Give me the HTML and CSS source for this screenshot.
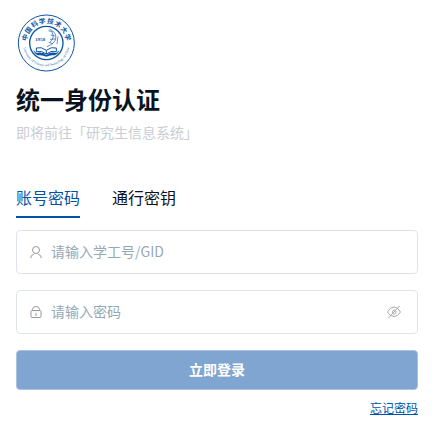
FILE: index.html
```
<!DOCTYPE html>
<html lang="zh-CN">
<head>
<meta charset="UTF-8">
<meta name="viewport" content="width=device-width, initial-scale=1">
<title>统一身份认证</title>
<link rel="stylesheet" href="styles.css">
</head>
<body>
<main class="login">
<svg class="logo" viewBox="0 0 180 180" role="img" aria-label="中国科学技术大学">
<defs><path id="arc" d="M21 87A70 70 0 0 0 161 87"/></defs>
<circle class="line" cx="91" cy="87" r="84" stroke-width="3"/>
<circle class="line" cx="91" cy="87" r="50" stroke-width="4"/>
<g class="name" transform="translate(91 87)">
<text y="-59" transform="rotate(-75)">中</text>
<text y="-59" transform="rotate(-54)">国</text>
<text y="-59" transform="rotate(-32)">科</text>
<text y="-59" transform="rotate(-11)">学</text>
<text y="-59" transform="rotate(11)">技</text>
<text y="-59" transform="rotate(32)">术</text>
<text y="-59" transform="rotate(54)">大</text>
<text y="-59" transform="rotate(75)">学</text>
</g>
<text class="latin"><textPath href="#arc" startOffset="50%">University of Science and Technology of China</textPath></text>
<text class="year" x="73" y="82">1958</text>
<!-- spray above the open book -->
<path class="line" stroke-width="2" d="M100 45Q123 55 119 75Q117 87 93 98M108 55Q117 69 103 84"/>
<path class="line" stroke-width="2" d="M97 50L110 54M104 63L116 65M102 76L117 75M98 85L111 89M126 67L123 90"/>
<path class="line" stroke-width="3" d="M91 120V109Q76 97 61 102V113Q78 109 91 120Q104 109 121 113V102Q106 97 91 109"/>
<path class="fill" d="M52 108L61 117Q79 113 91 123Q103 113 121 117L130 108Q126 121 116 124Q102 122 91 128Q80 122 66 124Q56 121 52 108Z"/>
</svg>
<h1>统一身份认证</h1>
<p class="target">即将前往「研究生信息系统」</p>
<nav class="tabs">
<button type="button" class="tab active">账号密码</button>
<button type="button" class="tab">通行密钥</button>
</nav>
<form>
<div class="field">
<label for="account" aria-label="学工号/GID">
<svg class="icon" viewBox="0 0 14 14"><circle cx="7" cy="5" r="3.5"/><path d="M2 13V12Q2 10 4.5 9.5L5.5 8.5M8.500 8.500L9.500 9.500Q12 10 12 12V13"/></svg>
</label>
<input type="text" id="account" placeholder="请输入学工号/GID">
</div>
<div class="field">
<label for="password" aria-label="密码">
<svg class="icon" viewBox="0 0 14 14"><rect x="2" y="5.5" width="10" height="7" rx="1"/><path d="M3.5 5.5V4.5Q3.5 1.500 7 1.500Q10.500 1.500 10.500 4.500V5.500M7 8V11"/></svg>
</label>
<input type="password" id="password" placeholder="请输入密码">
<button type="button" class="eye" aria-label="显示密码">
<svg class="icon" viewBox="0 0 14 14"><path d="M.5 7Q3 2 7 2Q11 2 13.500 7Q11 11.500 7 11.500Q3 11.500 .5 7ZM1.500 13L12.500 1M6 9Q4.500 7 6 5.500Q7 4.500 8 5M6.500 9.500Q9.500 9 9 6"/></svg>
</button>
</div>
<button type="submit" class="submit">立即登录</button>
</form>
<a class="forgot" href="#">忘记密码</a>
</main>
</body>
</html>
```

FILE: styles.css
```
*{box-sizing:border-box;}
body{margin:0;font:14px/20px "Noto Sans CJK SC",sans-serif;color:#0a1420;background:#fff;}
button,input{font:inherit;color:inherit;}
button{padding:0;border:none;background:none;cursor:pointer;}
.login{display:flex;flex-direction:column;padding:14px 24px 8px 16px;}
.logo{width:60px;height:60px;}
.logo .line{fill:none;stroke:#0d55a5;}
.logo .fill{fill:#0d55a5;}
.logo text{fill:#0d55a5;text-anchor:middle;}
.name{font-size:20px;font-weight:bold;}
.latin{font:10px "Liberation Serif",serif;}
.year{font:bold 15px "Liberation Serif",serif;}
h1{margin:9px 0 0;font-size:24px;line-height:32px;font-weight:bold;}
.target{margin:7px 0 0;color:#c9cdd4;}
.tabs{display:flex;gap:32px;margin-top:40px;}
.tab{height:36px;padding-bottom:4px;border-bottom:2px solid transparent;font-size:16px;line-height:24px;}
.tab.active{color:#0052a5;border-color:#0052a5;}
form{display:flex;flex-direction:column;gap:16px;margin-top:12px;}
.field{display:flex;align-items:center;gap:8px;height:44px;padding:0 16px 0 12px;border:1px solid #dfe3eb;border-radius:4px;}
.field label,.eye{display:flex;}
.field input{flex:1;min-width:0;padding:0 0 2px;border:none;outline:none;background:none;}
.field input::placeholder{color:#97a8b5;opacity:1;}
.icon{width:14px;height:14px;fill:none;stroke:#999;stroke-width:1;}
.eye .icon{stroke:#aaa;}
.submit{height:40px;padding-bottom:2px;border:1px solid #a9c3df;border-radius:4px;color:#fff;background:#80a5d0;font-weight:bold;}
.forgot{align-self:flex-end;margin-top:8px;font-size:12px;color:#0052a5;}
```
